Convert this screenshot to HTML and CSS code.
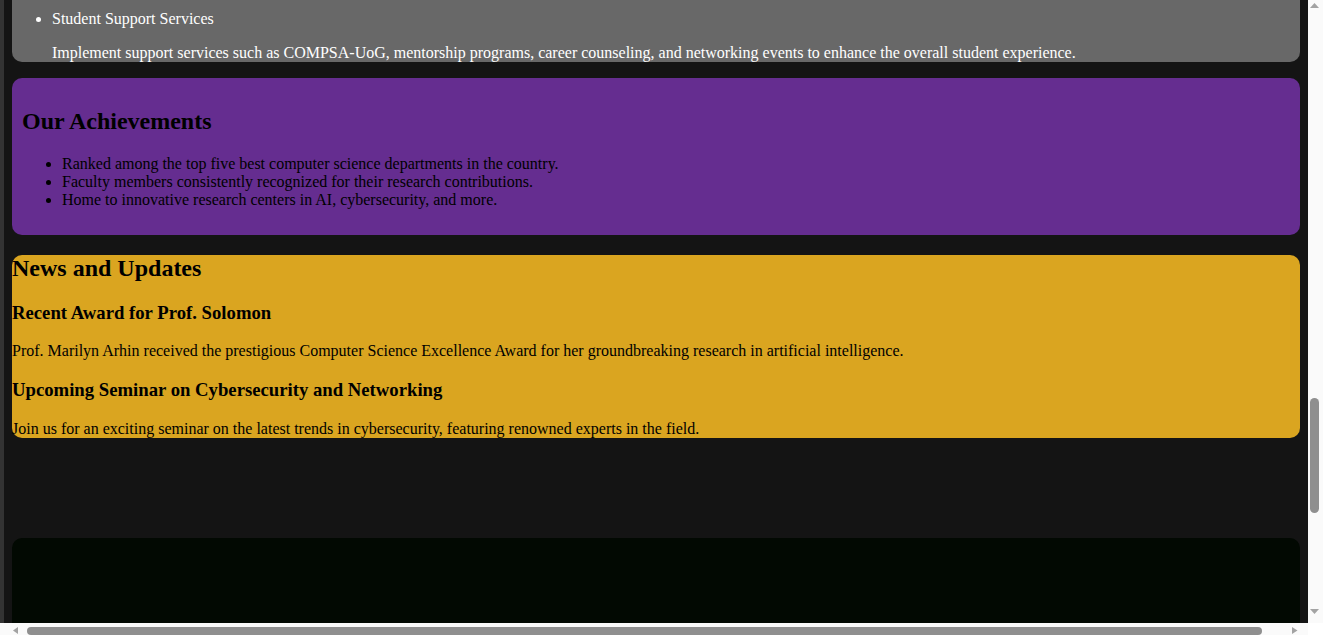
FILE: index.html
```html
<!DOCTYPE html>
<html lang="en">
<head>
<meta charset="utf-8">
<title>Department of Computer Science</title>
<link rel="stylesheet" href="styles.css">
</head>
<body>
<div class="window">
  <main class="viewport">
    <section class="panel goals">
      <ul>
        <li>Student Support Services
          <p>Implement support services such as COMPSA-UoG, mentorship programs, career counseling, and networking events to enhance the overall student experience.</p>
        </li>
      </ul>
    </section>

    <section class="panel achievements">
      <h2>Our Achievements</h2>
      <ul>
        <li>Ranked among the top five best computer science departments in the country.</li>
        <li>Faculty members consistently recognized for their research contributions.</li>
        <li>Home to innovative research centers in AI, cybersecurity, and more.</li>
      </ul>
    </section>

    <section class="panel news">
      <h2>News and Updates</h2>
      <h3>Recent Award for Prof. Solomon</h3>
      <p>Prof. Marilyn Arhin received the prestigious Computer Science Excellence Award for her groundbreaking research in artificial intelligence.</p>
      <h3>Upcoming Seminar on Cybersecurity and Networking</h3>
      <p>Join us for an exciting seminar on the latest trends in cybersecurity, featuring renowned experts in the field.</p>
    </section>

    <footer class="panel footer"></footer>
  </main>

  <div class="vscroll">
    <div class="sb-btn sb-up">
      <svg width="15" height="12" viewBox="0 0 15 12"><polygon points="2,8 6.5,3 11,8" fill="#a3a3a3"/></svg>
    </div>
    <div class="vtrack"><div class="vthumb"></div></div>
    <div class="sb-btn sb-down">
      <svg width="15" height="15" viewBox="0 0 15 15"><polygon points="2,1 11,1 6.5,6" fill="#a3a3a3"/></svg>
    </div>
  </div>

  <div class="hscroll">
    <div class="sb-btn sb-left">
      <svg width="20" height="12" viewBox="0 0 20 12"><polygon points="18,4 18,11 13,7.5" fill="#a3a3a3"/></svg>
    </div>
    <div class="htrack"><div class="hthumb"></div></div>
    <div class="sb-btn sb-right">
      <svg width="20" height="12" viewBox="0 0 20 12"><polygon points="4,4 4,11 9.5,7.5" fill="#a3a3a3"/></svg>
    </div>
  </div>

  <div class="corner"></div>
</div>
</body>
</html>
```

FILE: styles.css
```css
html,
body {
  margin: 0;
  height: 100%;
  overflow: hidden;
}

body {
  font-family: "Liberation Serif", "Times New Roman", serif;
  font-size: 16px;
  color: #000;
  background: #ffffff;
}

.window {
  display: grid;
  grid-template-columns: 1fr 15px;
  grid-template-rows: 623px 12px;
  height: 100vh;
}

.viewport {
  background: #141414;
  border-left: 4px solid #333333;
  padding: 0 8px;
  overflow: hidden;
}

.panel {
  border-radius: 10px;
}

.goals {
  background: #686868;
  color: #ffffff;
  border-radius: 0 0 10px 10px;
  padding-top: 10px;
}

.goals ul {
  margin: 0;
  padding-left: 40px;
}

.achievements {
  background: #652d90;
  padding: 10px;
}

.news {
  background: #daa520;
}

.footer {
  margin-top: 100px;
  height: 300px;
  background: #020902;
  border-radius: 10px 10px 0 0;
}

/* scrollbars */
.vscroll {
  background: #fafafa;
  display: flex;
  flex-direction: column;
}

.sb-btn {
  display: flex;
  flex: none;
}

.sb-btn svg {
  display: block;
}

.vtrack {
  flex: 1;
  padding-top: 386px;
}

.vthumb {
  width: 9px;
  height: 115px;
  margin-left: 2px;
  border-radius: 5px;
  background: #8f8f8f;
}

.hscroll {
  background: #fafafa;
  display: flex;
  align-items: flex-start;
}

.htrack {
  flex: 1;
  padding-left: 7px;
  padding-top: 4px;
}

.hthumb {
  width: 1235px;
  height: 8px;
  border-radius: 4px;
  background: #8f8f8f;
}

.corner {
  background: #ffffff;
}
```
